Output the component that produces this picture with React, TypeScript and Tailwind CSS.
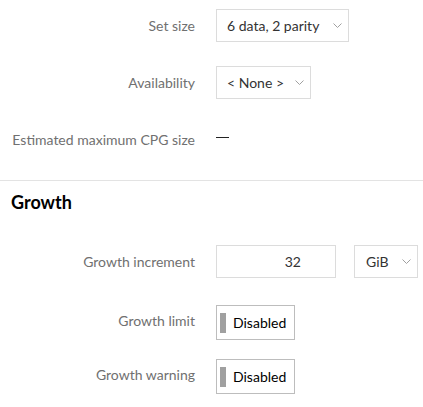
import React from "react";

const font = { fontFamily: "Lato, 'Noto Sans', sans-serif" };

function Chevron() {
  return (
    <svg width="9" height="5" viewBox="0 0 9 5" className="shrink-0">
      <path d="M0.5 0.5 L4.5 4.5 L8.5 0.5" fill="none" stroke="#a0a0a0" strokeWidth="1" />
    </svg>
  );
}

function Row({ label, children, className, labelClass = "" }: { label: string; children: React.ReactNode; className: string; labelClass?: string }) {
  return (
    <div className={"flex items-center " + className}>
      <div className={"w-[195px] shrink-0 whitespace-nowrap text-right text-[14px] text-[#707070] " + labelClass}>{label}</div>
      <div className="ml-[21px] flex items-center">{children}</div>
    </div>
  );
}

function Toggle() {
  return (
    <div className="flex h-[35px] w-[79px] items-center border border-[#bdbdbd] bg-white pl-[3px]">
      <div className="h-[20px] w-[6px] bg-[#a0a0a0]" />
      <span className="ml-[7px] text-[14px] text-black">Disabled</span>
    </div>
  );
}

export default function App() {
  return (
    <div className="h-[407px] w-[423px] overflow-hidden bg-white" style={font}>
      <div className="pt-[9px]">
        <Row label="Set size" className="h-[33px]">
          <div className="flex h-[33px] w-[133px] items-center justify-between border border-[#dcdcdc] pl-[10px] pr-[6px] text-[14px] text-[#333]">
            <span>6 data, 2 parity</span>
            <Chevron />
          </div>
        </Row>
        <Row label="Availability" className="mt-[24px] h-[33px]">
          <div className="flex h-[33px] w-[95px] items-center justify-between border border-[#dcdcdc] pl-[10px] pr-[6px] text-[14px] text-[#333]">
            <span>&lt; None &gt;</span>
            <Chevron />
          </div>
        </Row>
        <Row label="Estimated maximum CPG size" className="mt-[24px] h-[33px]">
          <div className="mt-[-4px] h-[1px] w-[13px] bg-[#222]" />
        </Row>
        <div className="mt-[24px] h-[1px] w-full bg-[#e3e3e3]" />
        <div className="h-[33px] pl-[11px] pt-[9px] text-[18px] font-bold leading-[24px] text-black">Growth</div>
        <Row label="Growth increment" className="mt-[31px] h-[33px]">
          <div className="flex h-[33px] w-[120px] items-center justify-end border border-[#dcdcdc] pr-[34px] text-[14px] text-[#333]">
            32
          </div>
          <div className="ml-[18px] flex h-[33px] w-[64px] items-center justify-between border border-[#dcdcdc] pl-[11px] pr-[6px] text-[14px] text-[#333]">
            <span>GiB</span>
            <Chevron />
          </div>
        </Row>
        <Row label="Growth limit" className="mt-[27px] h-[35px]" labelClass="-mt-[5px]">
          <Toggle />
        </Row>
        <Row label="Growth warning" className="mt-[19px] h-[35px]" labelClass="-mt-[5px]">
          <Toggle />
        </Row>
      </div>
    </div>
  );
}
